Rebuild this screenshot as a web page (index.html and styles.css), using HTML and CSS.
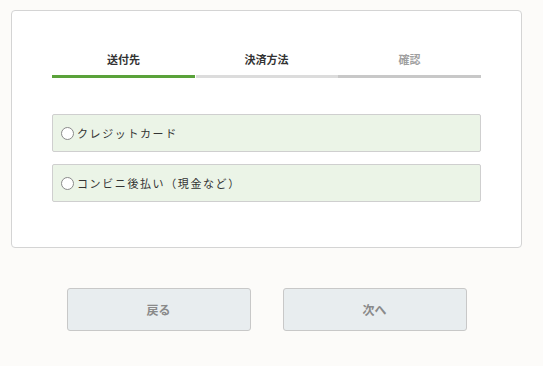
FILE: index.html
```html
<!DOCTYPE html>
<html lang="ja">
<head>
<meta charset="utf-8">
<link rel="stylesheet" href="styles.css">
</head>
<body>
<div class="page">
  <div class="card">
    <div class="steps">
      <div class="step done"><div class="label">送付先</div><div class="bar"></div></div>
      <div class="step current"><div class="label">決済方法</div><div class="bar"></div></div>
      <div class="step todo"><div class="label">確認</div><div class="bar"></div></div>
    </div>
    <div class="options">
      <label class="option"><span class="radio"></span><span class="opt-text">クレジットカード</span></label>
      <label class="option"><span class="radio"></span><span class="opt-text">コンビニ後払い（現金など）</span></label>
    </div>
  </div>
  <div class="actions">
    <button class="btn">戻る</button>
    <button class="btn">次へ</button>
  </div>
</div>
</body>
</html>
```
FILE: styles.css
```css
html, body {
  margin: 0;
  padding: 0;
  background: #fcfbf9;
  font-family: "Noto Sans CJK JP", "Noto Sans", sans-serif;
}
.page {
  padding: 10px 0 0 11px;
  width: 511px;
}
.card {
  background: #fff;
  border: 1px solid #d4d4d4;
  border-radius: 4px;
  padding: 41px 40px 45px;
  height: 236px;
  box-sizing: border-box;
  height: 238px;
}
.steps {
  display: grid;
  grid-template-columns: repeat(3, 143px);
}
.label {
  font-size: 11px;
  line-height: 14px;
  font-weight: bold;
  color: #333;
  text-align: center;
}
.step.todo .label {
  color: #a0a0a0;
}
.bar {
  height: 3px;
  margin-top: 9px;
  background: #dcdcdc;
}
.step.done .bar { background: #5aa23a; }
.step.current .bar { margin-left: 1px; }
.step.todo .bar { background: #c8c8c8; }
.options {
  margin-top: 36px;
  display: flex;
  flex-direction: column;
  gap: 12px;
}
.option {
  display: flex;
  align-items: center;
  height: 38px;
  box-sizing: border-box;
  border: 1px solid #cfcfcf;
  border-radius: 2px;
  background: #ebf4e7;
  padding-left: 8px;
}
.radio {
  width: 11px;
  height: 11px;
  border: 1px solid #8a8a8a;
  border-radius: 50%;
  background: #fff;
  margin-right: 3px;
}
.opt-text {
  font-size: 11px;
  letter-spacing: 1.6px;
  color: #333;
}
.actions {
  display: flex;
  justify-content: center;
  gap: 32px;
  margin-top: 40px;
  padding-right: 0;
}
.btn {
  width: 184px;
  height: 43px;
  border: 1px solid #c8c8c8;
  border-radius: 3px;
  background: #e8edef;
  color: #8a8a8a;
  font-family: "Noto Sans CJK JP", "Noto Sans", sans-serif;
  font-size: 12px;
  font-weight: bold;
}
```
